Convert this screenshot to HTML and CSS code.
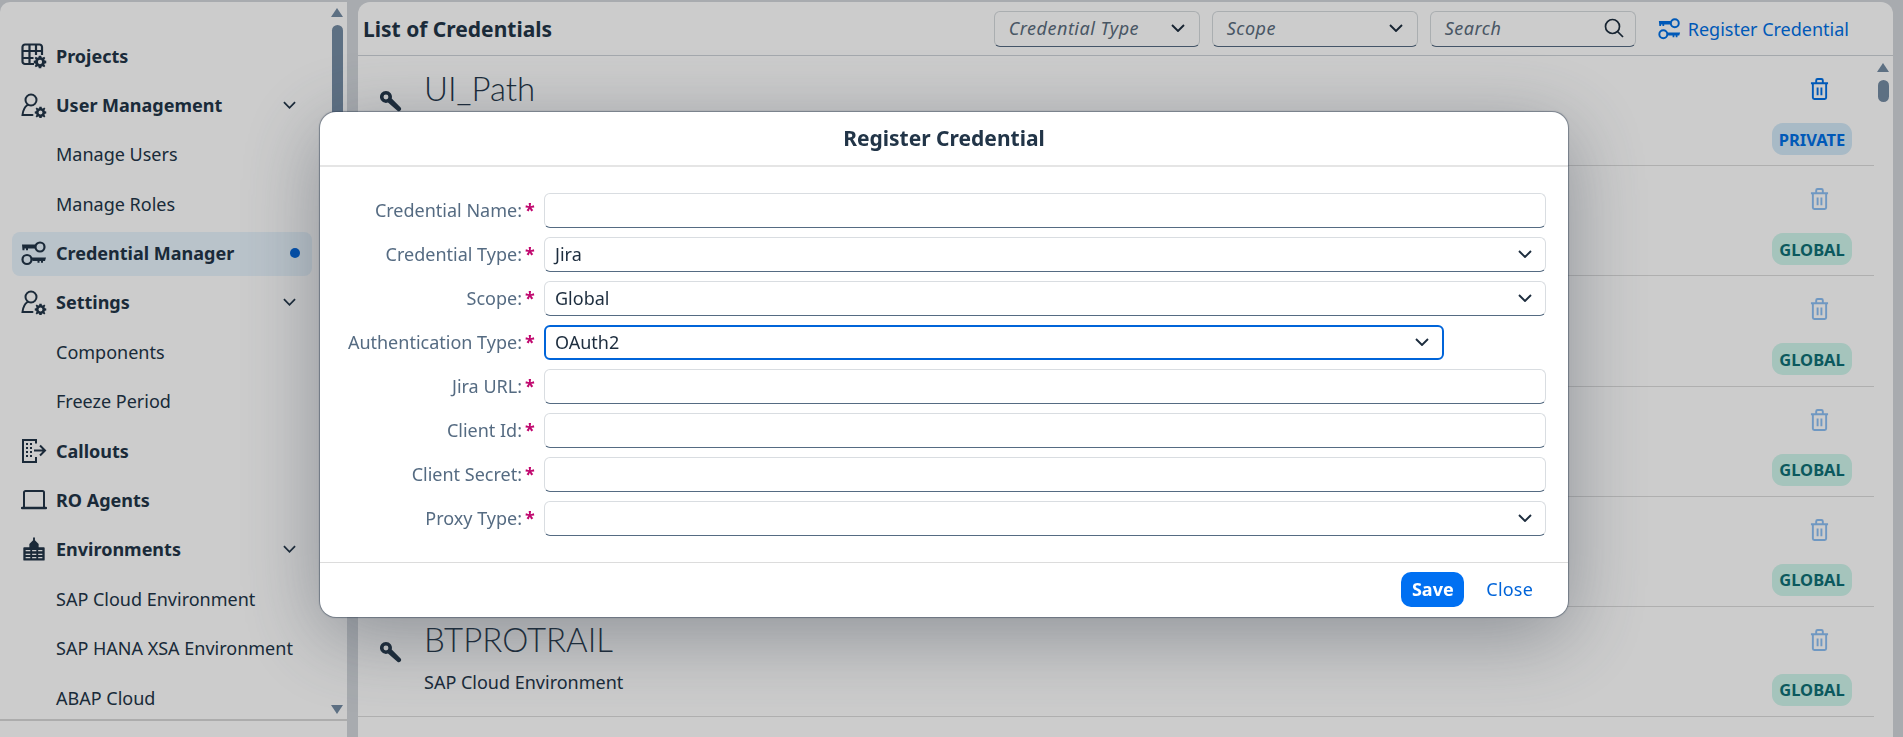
FILE: index.html
```html
<!DOCTYPE html>
<html lang="en">
<head>
  <meta charset="UTF-8" />
  <title>List of Credentials</title>
  <link rel="stylesheet" href="styles.css">
</head>
<body>

  <svg class="defs" width="0" height="0">
    <symbol id="i-chevron" viewBox="0 0 14 8">
      <path d="M1 1l6 6 6-6" fill="none" stroke="currentColor" stroke-width="1.900"/>
    </symbol>
    <symbol id="i-gear" viewBox="0 0 14 14">
      <path fill-rule="evenodd" fill="currentColor" d="M5.7 0h2.6l.3 1.9 1.2.5L11.4 1.3l1.3 1.3-1.1 1.6.5 1.2 1.9.3v2.6l-1.9.3-.5 1.2 1.1 1.6-1.3 1.3-1.6-1.1-1.2.5-.3 1.9H5.700l-.3-1.900-1.200-.5-1.600 1.100-1.300-1.300 1.100-1.600-.5-1.200L0 8.300V5.700l1.900-.3.5-1.200-1.100-1.600 1.300-1.300 1.600 1.100 1.200-.5zM7 4.700a2.300 2.300 0 1 0 0 4.600 2.300 2.300 0 0 0 0-4.600z"/>
    </symbol>
    <symbol id="i-user" viewBox="0 0 26 26">
      <circle cx="10" cy="8" r="5.500" fill="none" stroke="currentColor" stroke-width="2"/>
      <path d="M6.500 13C3.500 15 2 18 1.500 23h10" fill="none" stroke="currentColor" stroke-width="2" stroke-linecap="round"/>
      <use href="#i-gear" x="13.500" y="14.500" width="12" height="12"/>
    </symbol>
    <symbol id="i-table" viewBox="0 0 26 26">
      <path d="M13 21H4a2.500 2.500 0 0 1-2.500-2.500V4A2.500 2.500 0 0 1 4 1.500h14.500A2.500 2.500 0 0 1 21 4v8M1.500 8h19.500M1.500 15h11M8.500 1.500V20M15 1.500V12" fill="none" stroke="currentColor" stroke-width="2.200"/>
      <use href="#i-gear" x="12.500" y="12.500" width="13" height="13"/>
    </symbol>
    <symbol id="i-keys" viewBox="0 0 26 26">
      <circle cx="19" cy="7" r="4.500" fill="none" stroke="currentColor" stroke-width="2.200"/>
      <path fill="currentColor" d="M1 4.500h13.500V8.500H7v1.800H5V8.500H3.500v1.800h-2z"/>
      <circle cx="6" cy="19.500" r="4.500" fill="none" stroke="currentColor" stroke-width="2.200"/>
      <path fill="currentColor" d="M10.500 17.500H25l-1 3.500h-2v1.800h-2V21h-1.500v1.800h-2V21h-5z"/>
    </symbol>
    <symbol id="i-callout" viewBox="0 0 26 26">
      <path d="M15 5.500V2H2v22h13v-5" fill="none" stroke="currentColor" stroke-width="2"/>
      <path fill="currentColor" d="M5 5h2v2H5zm4 0h2v2H9zM5 9h2v2H5zm4 0h2v2H9zm-4 4h2v2H5zm4 0h2v2H9zm-4 4h2v2H5zm4 0h2v2H9z"/>
      <path d="M13 12.500h11M19 7.500l5 5-5 5" fill="none" stroke="currentColor" stroke-width="2"/>
    </symbol>
    <symbol id="i-laptop" viewBox="0 0 26 26">
      <path d="M3 20V5.500A1.500 1.500 0 0 1 4.500 4h17A1.500 1.500 0 0 1 23 5.500V20" fill="none" stroke="currentColor" stroke-width="2"/>
      <path d="M1 21h24" stroke="currentColor" stroke-width="2.400" stroke-linecap="round"/>
    </symbol>
    <symbol id="i-city" viewBox="-1 -1 28 27">
      <path fill="currentColor" fill-rule="evenodd" d="M12 0h2v3l4 4v3.500h5.500a1 1 0 0 1 1 1V24a1 1 0 0 1-1 1h-21a1 1 0 0 1-1-1V11.500a1 1 0 0 1 1-1H8V7l4-4zM4 13.500V15h5v-1.500zm7 0V15h4.500v-1.500zm6.500 0V15H22v-1.500zM4 17.500V19h5v-1.500zm7 0V19h4.500v-1.500zm6.500 0V19H22v-1.500zM4 21v1.500h5V21zm7 0v1.500h4.500V21zm6.500 0v1.500H22V21z"/>
    </symbol>
    <symbol id="i-trash" viewBox="0 0 20 23">
      <path d="M1 5.500h18M6.500 5V2.500a1.500 1.500 0 0 1 1.500-1.500h4a1.500 1.500 0 0 1 1.500 1.500V5M3 6v14.500A1.500 1.500 0 0 0 4.500 22h11a1.500 1.500 0 0 0 1.500-1.500V6M8 10v8M12 10v8" fill="none" stroke="currentColor" stroke-width="2"/>
    </symbol>
    <symbol id="i-key" viewBox="0 0 24 24">
      <path fill="currentColor" fill-rule="evenodd" d="M6.500 0a6.500 6.500 0 0 1 6.300 8.200L22.500 18a2.500 2.500 0 0 1-3.500 3.500L8.700 12.600A6.500 6.500 0 1 1 6.500 0zm0 3.800a2.700 2.700 0 1 0 0 5.400 2.700 2.700 0 0 0 0-5.400z"/>
    </symbol>
    <symbol id="i-search" viewBox="0 0 20 20">
      <circle cx="8.500" cy="8.500" r="7" fill="none" stroke="currentColor" stroke-width="1.700"/>
      <path d="M13.500 13.500l5.500 5.500" stroke="currentColor" stroke-width="1.700"/>
    </symbol>
  </svg>

  <div class="page">
    <aside class="sidebar">
      <div class="sidebar-body">
        <nav class="nav">
          <a class="nav-item main"><svg class="nav-icon"><use href="#i-table"/></svg>Projects</a>
          <a class="nav-item main"><svg class="nav-icon"><use href="#i-user"/></svg>User Management<svg class="nav-chevron"><use href="#i-chevron"/></svg></a>
          <a class="nav-item">Manage Users</a>
          <a class="nav-item">Manage Roles</a>
          <a class="nav-item main selected"><svg class="nav-icon"><use href="#i-keys"/></svg>Credential Manager<span class="nav-dot"></span></a>
          <a class="nav-item main"><svg class="nav-icon"><use href="#i-user"/></svg>Settings<svg class="nav-chevron"><use href="#i-chevron"/></svg></a>
          <a class="nav-item">Components</a>
          <a class="nav-item">Freeze Period</a>
          <a class="nav-item main"><svg class="nav-icon"><use href="#i-callout"/></svg>Callouts</a>
          <a class="nav-item main"><svg class="nav-icon"><use href="#i-laptop"/></svg>RO Agents</a>
          <a class="nav-item main"><svg class="nav-icon"><use href="#i-city"/></svg>Environments<svg class="nav-chevron"><use href="#i-chevron"/></svg></a>
          <a class="nav-item">SAP Cloud Environment</a>
          <a class="nav-item">SAP HANA XSA Environment</a>
          <a class="nav-item">ABAP Cloud</a>
        </nav>
        <div class="scrollbar side-scroll">
          <span class="arrow-up"></span>
          <span class="thumb side-thumb"></span>
          <span class="arrow-down"></span>
        </div>
      </div>
    </aside>

    <main class="content">
      <header class="toolbar">
        <h1>List of Credentials</h1>
        <div class="filters">
          <div class="filter">Credential Type<svg class="chevron"><use href="#i-chevron"/></svg></div>
          <div class="filter">Scope<svg class="chevron"><use href="#i-chevron"/></svg></div>
          <div class="filter">Search<svg class="search-icon"><use href="#i-search"/></svg></div>
          <a class="register"><svg class="register-icon"><use href="#i-keys"/></svg>Register Credential</a>
        </div>
      </header>

      <div class="list-wrap">
        <ul class="list">
          <li class="row">
            <svg class="row-key"><use href="#i-key"/></svg>
            <div class="row-text"><div class="row-title">UI_Path</div></div>
            <div class="row-side">
              <svg class="trash"><use href="#i-trash"/></svg>
              <span class="badge private">PRIVATE</span>
            </div>
          </li>
          <li class="row">
            <div class="row-side">
              <svg class="trash off"><use href="#i-trash"/></svg>
              <span class="badge global">GLOBAL</span>
            </div>
          </li>
          <li class="row">
            <div class="row-side">
              <svg class="trash off"><use href="#i-trash"/></svg>
              <span class="badge global">GLOBAL</span>
            </div>
          </li>
          <li class="row">
            <div class="row-side">
              <svg class="trash off"><use href="#i-trash"/></svg>
              <span class="badge global">GLOBAL</span>
            </div>
          </li>
          <li class="row">
            <div class="row-side">
              <svg class="trash off"><use href="#i-trash"/></svg>
              <span class="badge global">GLOBAL</span>
            </div>
          </li>
          <li class="row">
            <svg class="row-key"><use href="#i-key"/></svg>
            <div class="row-text">
              <div class="row-title">BTPROTRAIL</div>
              <div class="row-sub">SAP Cloud Environment</div>
            </div>
            <div class="row-side">
              <svg class="trash off"><use href="#i-trash"/></svg>
              <span class="badge global">GLOBAL</span>
            </div>
          </li>
        </ul>
        <div class="scrollbar list-scroll">
          <span class="arrow-up"></span>
          <span class="thumb list-thumb"></span>
        </div>
      </div>
    </main>
  </div>

  <div class="overlay">
    <section class="dialog">
      <h2 class="dialog-title">Register Credential</h2>
      <form class="dialog-form">
        <label class="label">Credential Name:<span class="req">*</span></label>
        <div class="field"></div>

        <label class="label">Credential Type:<span class="req">*</span></label>
        <div class="field">Jira<svg class="chevron"><use href="#i-chevron"/></svg></div>

        <label class="label">Scope:<span class="req">*</span></label>
        <div class="field">Global<svg class="chevron"><use href="#i-chevron"/></svg></div>

        <label class="label">Authentication Type:<span class="req">*</span></label>
        <div class="field focused">OAuth2<svg class="chevron"><use href="#i-chevron"/></svg></div>

        <label class="label">Jira URL:<span class="req">*</span></label>
        <div class="field"></div>

        <label class="label">Client Id:<span class="req">*</span></label>
        <div class="field"></div>

        <label class="label">Client Secret:<span class="req">*</span></label>
        <div class="field"></div>

        <label class="label">Proxy Type:<span class="req">*</span></label>
        <div class="field"><svg class="chevron"><use href="#i-chevron"/></svg></div>
      </form>
      <footer class="dialog-footer">
        <button class="btn-save" type="button">Save</button>
        <button class="btn-close" type="button">Close</button>
      </footer>
    </section>
  </div>

</body>
</html>
```

FILE: styles.css
```css
* {
  box-sizing: border-box;
}

html,
body {
  height: 100%;
}

body {
  margin: 0;
  overflow: hidden;
  font-family: "Noto Sans", Arial, sans-serif;
  font-size: 18px;
  color: #223548;
  background: #d2d6db;
}

.defs {
  position: absolute;
}

.page {
  display: flex;
  gap: 11px;
  height: 737px;
  padding: 2px 10px 0 0;
}

/* sidebar */
.sidebar {
  flex: 0 0 347px;
  background: #fff;
  border-top-left-radius: 10px;
  padding-bottom: 16px;
}

.sidebar-body {
  display: flex;
  height: 100%;
  padding: 0 4px 0 12px;
  border-bottom: 2px solid #d8d8d8;
  overflow: hidden;
}

.nav {
  flex: 0 0 300px;
  display: flex;
  flex-direction: column;
  gap: 5.4px;
  padding-top: 32px;
}

.nav-item {
  display: flex;
  align-items: center;
  flex: 0 0 44px;
  padding-left: 44px;
  padding-bottom: 1px;
  border-radius: 8px;
  white-space: nowrap;
}

.nav-item.main {
  padding-left: 9px;
  font-weight: 700;
}

.nav-item.selected {
  background: #e8f4fd;
}

.nav-icon {
  flex: 0 0 26px;
  width: 26px;
  height: 26px;
  margin-right: 9px;
}

.nav-chevron {
  width: 13px;
  height: 8px;
  margin-left: auto;
  margin-right: 16px;
}

.nav-dot {
  width: 10px;
  height: 10px;
  margin-left: auto;
  margin-right: 12px;
  border-radius: 50%;
  background: #0064d9;
}

.scrollbar {
  display: flex;
  flex-direction: column;
  align-items: center;
  width: 12px;
}

.side-scroll {
  margin-left: 19px;
  padding-top: 6px;
  padding-bottom: 5px;
}

.arrow-up,
.arrow-down {
  width: 0;
  height: 0;
  border-left: 6px solid transparent;
  border-right: 6px solid transparent;
}

.arrow-up {
  border-bottom: 9px solid #758ca4;
}

.arrow-down {
  margin-top: auto;
  border-top: 9px solid #758ca4;
}

.thumb {
  width: 11px;
  margin-top: 8px;
  border-radius: 6px;
  background: #758ca4;
}

.side-thumb {
  height: 400px;
}

.list-thumb {
  height: 22px;
}

/* main area */
.content {
  flex: 1;
  display: flex;
  flex-direction: column;
  min-width: 0;
  background: #fff;
  border-radius: 12px 12px 0 0;
}

.toolbar {
  display: flex;
  align-items: center;
  justify-content: space-between;
  flex: 0 0 54px;
  padding: 0 44px 0 5px;
  border-bottom: 1px solid #cdd2d8;
}

.toolbar h1 {
  margin: 0;
  font-size: 21px;
  font-weight: 700;
}

.filters {
  display: flex;
  align-items: center;
  gap: 12px;
}

.filter {
  display: flex;
  align-items: center;
  justify-content: space-between;
  width: 206px;
  height: 36px;
  padding: 0 14px 1px;
  font-style: italic;
  letter-spacing: 0.5px;
  color: #5b6c7d;
  border: 1px solid #d5dadd;
  border-bottom-color: #556b82;
  border-radius: 6px;
}

.chevron {
  flex: 0 0 14px;
  width: 14px;
  height: 8px;
  color: #1d2d3e;
}

.search-icon {
  width: 20px;
  height: 20px;
  margin-right: -3px;
  color: #1d2d3e;
}

.register {
  display: flex;
  align-items: center;
  gap: 7px;
  margin-left: 10px;
  color: #0070e6;
}

.register-icon {
  width: 23px;
  height: 23px;
}

.list-wrap {
  flex: 1;
  display: flex;
  min-height: 0;
}

.list {
  flex: 1;
  margin: 0;
  padding: 0;
  list-style: none;
}

.row {
  display: flex;
  height: 110.2px;
  border-bottom: 1px solid #dbdbdb;
}

.row-key {
  flex: 0 0 22px;
  width: 22px;
  height: 22px;
  margin: 35px 22px 0 22px;
}

.row-text {
  flex: 1;
  padding-top: 12px;
}

.row-title {
  font-family: Lato, "Noto Sans", sans-serif;
  font-size: 33px;
  font-weight: 300;
  line-height: 40px;
}

.row-sub {
  margin-top: 11px;
  line-height: 24px;
}

.row-side {
  display: flex;
  flex-direction: column;
  align-items: flex-end;
  margin-left: auto;
  padding: 22px 22px 0 0;
}

.trash {
  width: 19px;
  height: 22px;
  margin: 0 23px 23px 0;
  color: #0070e6;
}

.trash.off {
  opacity: 0.45;
}

.badge {
  display: flex;
  align-items: center;
  justify-content: center;
  width: 80px;
  height: 32px;
  border-radius: 11px;
  font-weight: 700;
  font-size: 16.5px;
}

.badge.private {
  background: #d3e9f8;
  color: #0070e6;
}

.badge.global {
  background: #cff5ec;
  color: #0e7076;
}

.list-scroll {
  margin: 7px 4px 0 3px;
}

/* dialog */
.overlay {
  position: fixed;
  top: 0;
  left: 0;
  width: 100%;
  height: 100%;
  padding: 112px 0 0 320px;
  background: rgba(0, 0, 0, 0.2);
}

.dialog {
  display: flex;
  flex-direction: column;
  width: 1248px;
  height: 505px;
  background: #fff;
  border-radius: 16px;
  box-shadow: 0 0 1px 1px rgba(50, 65, 85, 0.5), 0 18px 80px rgba(50, 60, 75, 0.42);
}

.dialog-title {
  flex: 0 0 55px;
  margin: 0;
  font-size: 21px;
  font-weight: 700;
  line-height: 52px;
  text-align: center;
  border-bottom: 2px solid #e5e5e5;
}

.dialog-form {
  flex: 1;
  display: grid;
  grid-template-columns: 214px 1002px;
  grid-auto-rows: 35px;
  align-content: start;
  gap: 9px 10px;
  padding: 26px 0 0 0;
}

.label {
  display: flex;
  align-items: center;
  justify-content: flex-end;
  padding-bottom: 2px;
  color: #556b82;
  white-space: nowrap;
}

.req {
  margin-left: 3px;
  width: 9px;
  font-weight: 700;
  color: #c0076e;
  line-height: 1;
}

.field {
  display: flex;
  align-items: center;
  justify-content: space-between;
  padding: 0 13px 2px 10px;
  color: #1d2d3e;
  background: #fff;
  border: 1px solid #d9dde1;
  border-bottom-color: #556b82;
  border-radius: 6px;
}

.field .chevron {
  margin-left: auto;
}

.field.focused {
  width: 900px;
  border: 2px solid #0064d9;
  padding: 0 13px 2px 9px;
}

.dialog-footer {
  display: flex;
  align-items: center;
  justify-content: flex-end;
  flex: 0 0 55px;
  gap: 11px;
  padding: 0 23px 2px 0;
  border-top: 1px solid #dcdcdc;
}

.btn-save,
.btn-close {
  height: 35px;
  padding: 0 12px 0 11px;
  border: none;
  border-radius: 10px;
  font-family: inherit;
  font-size: 18px;
  cursor: pointer;
}

.btn-save {
  width: 63px;
  padding: 0;
  font-weight: 700;
  color: #fff;
  background: #0070f2;
}

.btn-close {
  letter-spacing: 0.2px;
  color: #0064d9;
  background: transparent;
}
```
